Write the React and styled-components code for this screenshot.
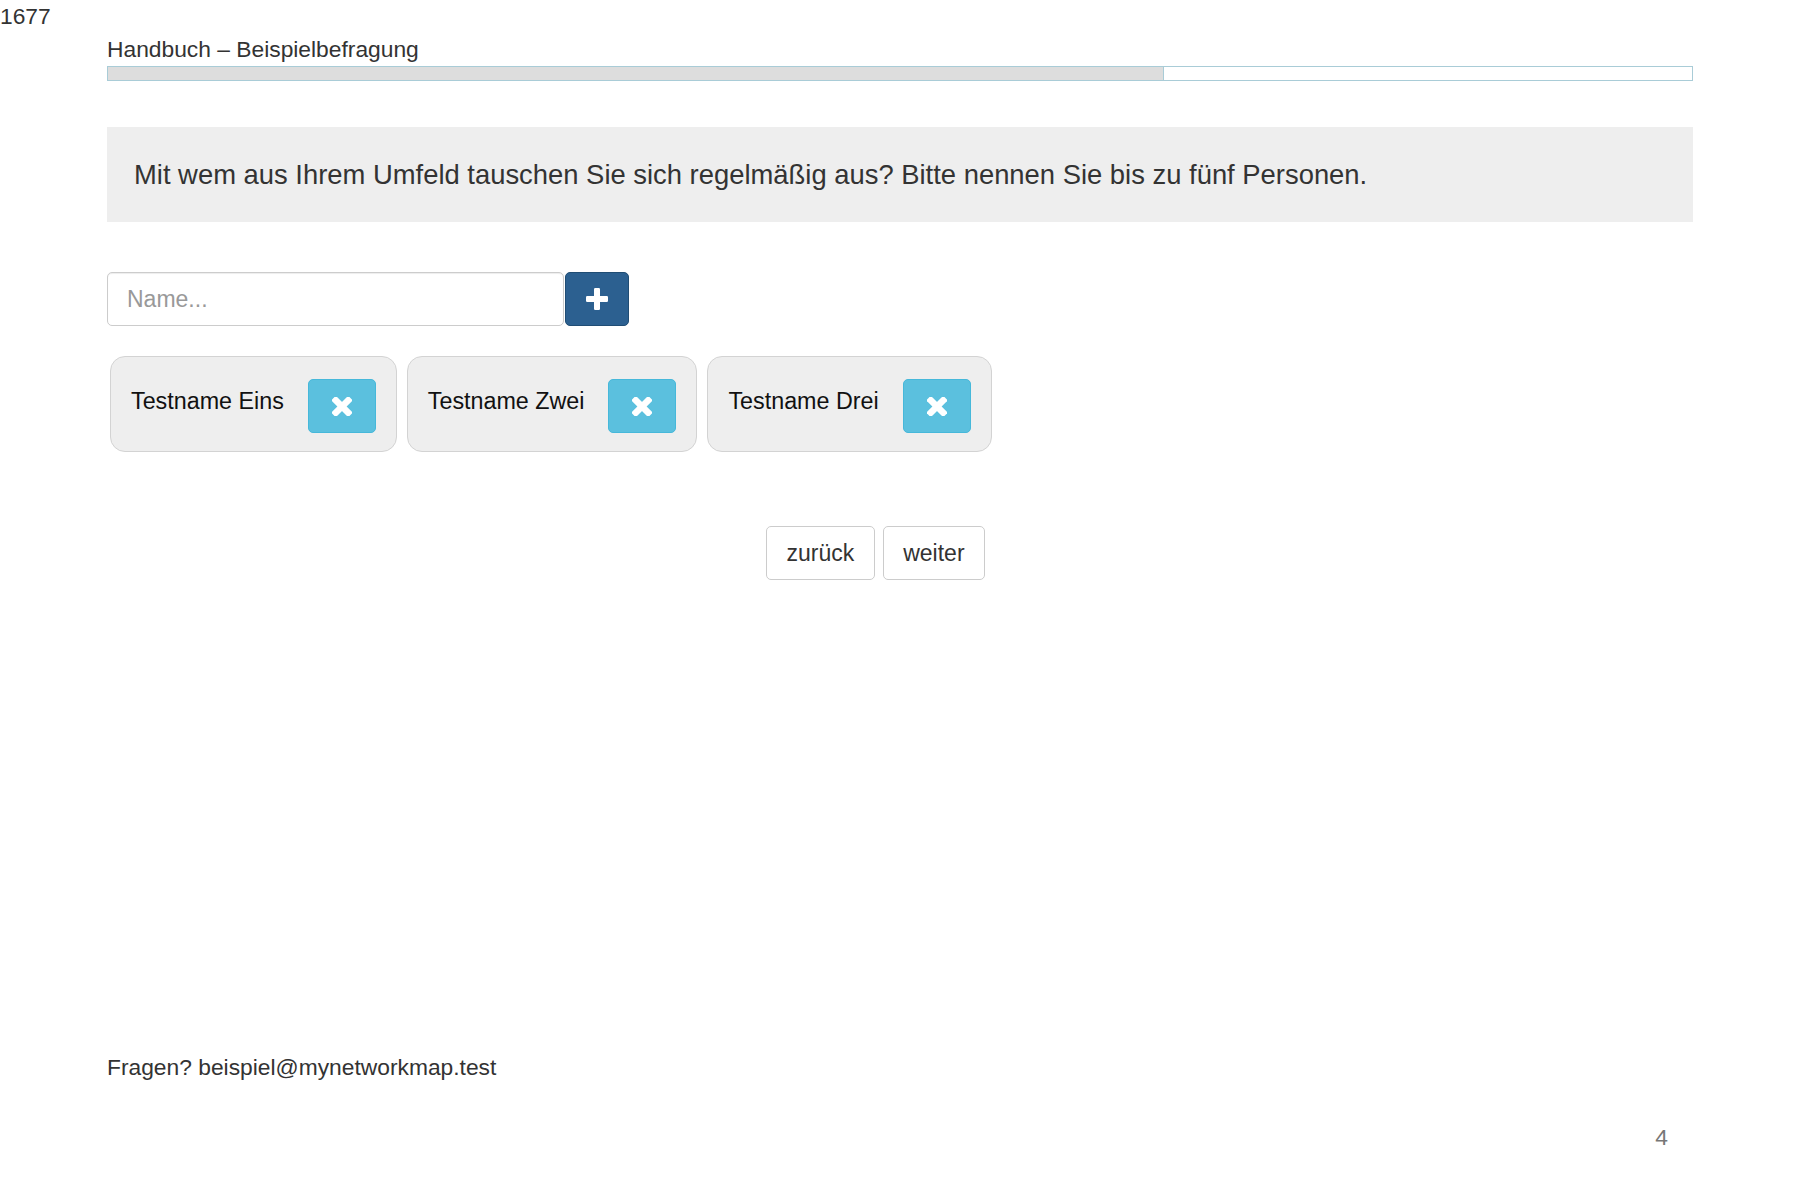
import React from "react";
import styled, { createGlobalStyle } from "styled-components";

const GlobalStyle = createGlobalStyle`
  html, body {
    margin: 0;
    padding: 0;
    background: #ffffff;
  }
  body {
    font-family: "Liberation Sans", Arial, Helvetica, sans-serif;
    font-size: 22.8px;
    line-height: 33px;
    color: #333333;
  }
  * { box-sizing: border-box; }
`;

const Page = styled.div`
  min-height: 1177px;
`;

const Counter = styled.div`
  color: #333333;
`;

const Container = styled.div`
  margin: 0 107px;
  display: flex;
  flex-direction: column;
`;

const Title = styled.div`
  color: #333333;
`;

const Progress = styled.div`
  height: 15px;
  border: 1px solid #a9ccd7;
  background: #ffffff;
  display: flex;
`;

const ProgressFill = styled.div`
  height: 100%;
  background: #dddddd;
  border-right: 1px solid #a9ccd7;
`;

const QuestionBox = styled.div`
  margin-top: 46px;
  background: #eeeeee;
  padding: 28px 27px;
  font-size: 27.4px;
  line-height: 39px;
  color: #333333;
`;

const InputRow = styled.div`
  margin-top: 50px;
  display: flex;
  gap: 1px;
`;

const NameInput = styled.input`
  width: 457px;
  height: 54px;
  padding: 0 19px;
  border: 1px solid #cccccc;
  border-radius: 5px;
  box-shadow: inset 0 1px 1px rgba(0, 0, 0, 0.075);
  font-family: inherit;
  font-size: 23px;
  color: #555555;
  outline: none;
  &::placeholder {
    color: #999999;
  }
`;

const AddButton = styled.button`
  width: 64px;
  height: 54px;
  display: flex;
  align-items: center;
  justify-content: center;
  background: #2c6090;
  border: 1px solid #204d74;
  border-radius: 5px;
  color: #ffffff;
  padding: 0;
  cursor: pointer;
`;

const Cards = styled.div`
  margin-top: 30px;
  margin-left: 3px;
  display: flex;
  gap: 10px;
`;

const Card = styled.div`
  display: flex;
  align-items: center;
  gap: 24px;
  padding: 22px 20px 18px 20px;
  background: #eeeeee;
  border: 1px solid #d3d3d3;
  border-radius: 15px;
`;

const CardName = styled.span`
  color: #111111;
  font-size: 23.3px;
  padding-bottom: 10px;
  white-space: nowrap;
`;

const DeleteButton = styled.button`
  width: 68px;
  height: 54px;
  display: flex;
  align-items: center;
  justify-content: center;
  background: #5bc0de;
  border: 1px solid #46b8da;
  border-radius: 5px;
  color: #ffffff;
  padding: 0;
  cursor: pointer;
`;

const NavRow = styled.div`
  margin-top: 74px;
  display: flex;
  justify-content: center;
  gap: 8px;
  padding-right: 49px;
`;

const NavButton = styled.button`
  height: 54px;
  padding: 0 19.5px;
  background: #ffffff;
  border: 1px solid #cccccc;
  border-radius: 5px;
  font-family: inherit;
  font-size: 23px;
  color: #333333;
  cursor: pointer;
`;

const Footer = styled.div`
  margin-top: 471px;
  color: #333333;
`;

const PageNumber = styled.div`
  margin-top: 37px;
  text-align: right;
  padding-right: 25px;
  color: #777777;
`;

const PlusIcon = () => (
  <svg width="22" height="22" viewBox="0 0 22 22" aria-hidden="true">
    <rect x="8" y="0" width="6" height="22" rx="1.2" fill="currentColor" />
    <rect x="0" y="8" width="22" height="6" rx="1.2" fill="currentColor" />
  </svg>
);

const TimesIcon = () => (
  <svg width="20" height="19" viewBox="0 0 20 19" aria-hidden="true">
    <g fill="currentColor" transform="translate(10 9.5)">
      <rect x="-12" y="-3.2" width="24" height="6.4" rx="1.2" transform="rotate(45)" />
      <rect x="-12" y="-3.2" width="24" height="6.4" rx="1.2" transform="rotate(-45)" />
    </g>
  </svg>
);

const names = ["Testname Eins", "Testname Zwei", "Testname Drei"];

export default function App() {
  const progress = 66.67;
  return (
    <Page>
      <GlobalStyle />
      <Counter>1677</Counter>
      <Container>
        <Title>Handbuch – Beispielbefragung</Title>
        <Progress>
          <ProgressFill style={{ width: `${progress}%` }} />
        </Progress>
        <QuestionBox>
          Mit wem aus Ihrem Umfeld tauschen Sie sich regelmäßig aus? Bitte nennen Sie bis zu fünf Personen.
        </QuestionBox>
        <InputRow>
          <NameInput placeholder="Name..." />
          <AddButton aria-label="hinzufügen">
            <PlusIcon />
          </AddButton>
        </InputRow>
        <Cards>
          {names.map((n) => (
            <Card key={n}>
              <CardName>{n}</CardName>
              <DeleteButton aria-label="entfernen">
                <TimesIcon />
              </DeleteButton>
            </Card>
          ))}
        </Cards>
        <NavRow>
          <NavButton>zurück</NavButton>
          <NavButton>weiter</NavButton>
        </NavRow>
        <Footer>Fragen? beispiel@mynetworkmap.test</Footer>
        <PageNumber>4</PageNumber>
      </Container>
    </Page>
  );
}
